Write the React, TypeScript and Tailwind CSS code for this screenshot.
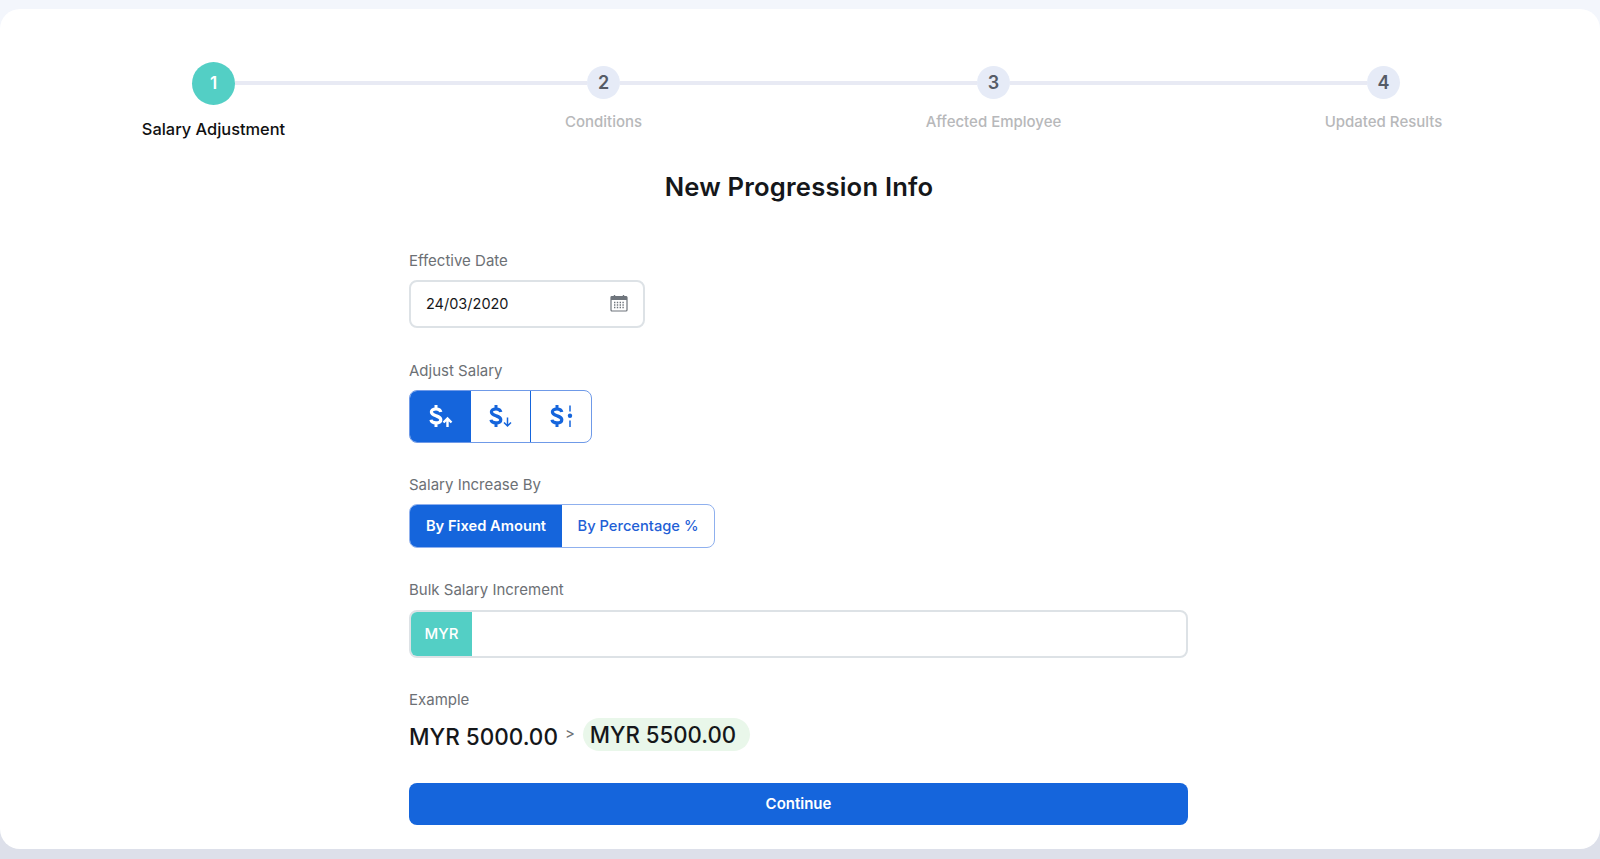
const steps = [
  { n: 1, label: "Salary Adjustment" },
  { n: 2, label: "Conditions" },
  { n: 3, label: "Affected Employee" },
  { n: 4, label: "Updated Results" },
]

function Stepper() {
  return (
    <div className="grid grid-cols-[390px_390px_390px_390px] pl-[18.5px] pt-[53px]">
      {steps.map((step, i) => (
        <div key={step.n} className="flex flex-col items-center">
          <div className="flex h-[42px] w-full items-center">
            <div className={i === 0 ? "h-1 flex-1" : "h-1 flex-1 bg-[#e8eaf4]"} />
            {i === 0 ? (
              <div className="flex h-[43px] w-[43px] shrink-0 items-center justify-center rounded-full bg-[#53cfc5] pt-[2px] text-[17px] font-semibold text-white">
                {step.n}
              </div>
            ) : (
              <div className="mb-px flex h-[33px] w-[33px] shrink-0 items-center justify-center rounded-full bg-[#e6ebf7] text-[18px] font-semibold text-[#555b66]">
                {step.n}
              </div>
            )}
            <div className={i === 3 ? "h-1 flex-1" : "h-1 flex-1 bg-[#e8eaf4]"} />
          </div>
          {i === 0 ? (
            <div className="mt-[15px] text-[16.4px] leading-5 font-medium whitespace-nowrap text-[#111]">{step.label}</div>
          ) : (
            <div className="mt-[8px] text-[15px] leading-5 font-medium whitespace-nowrap text-[#b7b8ba]">{step.label}</div>
          )}
        </div>
      ))}
    </div>
  )
}

function Label({ children }: { children: string }) {
  return <div className="text-[15px] leading-5 text-[#6c7075]">{children}</div>
}

function CalendarIcon() {
  return (
    <svg width="18" height="18" viewBox="0 0 18 18" fill="none" className="-mt-[2px] -mr-[1px] text-[#6f757c]">
      <rect x="1" y="2.5" width="16" height="14.5" rx="1" stroke="currentColor" strokeWidth="1.2" />
      <rect x="1" y="2.5" width="16" height="3.5" fill="currentColor" />
      <path d="M4.5 1v2.5M13.5 1v2.5" stroke="currentColor" strokeWidth="1.4" />
      <path d="M4 8.5h10M4 11h10M4 13.5h10" stroke="currentColor" strokeWidth="1.3" strokeDasharray="1.4 1.4" />
    </svg>
  )
}

// dollar mark with a small up / down / range marker on its right
function AdjustIcon({ kind }: { kind: "up" | "down" | "range" }) {
  return (
    <svg width="26" height="26" viewBox="0 0 26 26" fill="none" stroke="currentColor" className="mt-px">
      <path
        d="M12.8 8C12.4 5.8 10.6 5 8 5C5.2 5 3.4 6.1 3.4 8.1C3.4 10.3 5.6 11 8 11.8C10.4 12.6 12.8 13.3 12.8 15.7C12.8 17.8 10.9 18.9 8 18.9C5.2 18.9 3.3 17.9 3 15.8"
        strokeWidth="3.2"
      />
      <path d="M8 1v4M8 18.9V23" strokeWidth="3" />
      {kind === "up" && <path d="M19.5 23v-8.5M15.5 18.5l4-4 4 4" strokeWidth="2.4" />}
      {kind === "down" && <path d="M19.5 13.5V22M16 18.5l3.5 3.5 3.5-3.5" strokeWidth="1.5" />}
      {kind === "range" && (
        <>
          <path d="M21 1.5v6M21 16.5v6.5" strokeWidth="1.5" />
          <circle cx="21" cy="11.8" r="2.2" fill="currentColor" stroke="none" />
        </>
      )}
    </svg>
  )
}

export default function App() {
  return (
    <div className="h-[859px] overflow-hidden bg-[linear-gradient(#f3f6fc_50%,#dde0ea_50%)] pt-[9px] font-['Inter',sans-serif]">
      <div className="h-[840px] rounded-[20px] bg-white">
        <Stepper />

        <h1 className="mt-[30px] pr-[2px] text-center text-[25.6px] leading-9 font-semibold tracking-[0.2px] text-[#15171a]">
          New Progression Info
        </h1>

        <div className="mt-[46px] ml-[409px] w-[779px]">
          <Label>Effective Date</Label>
          <div className="mt-[9px] flex h-12 w-[236px] items-center justify-between rounded-lg border-2 border-[#dde2e6] pr-4 pl-[15px] text-[14.5px] text-[#15171a]">
            <span>24/03/2020</span>
            <CalendarIcon />
          </div>

          <div className="mt-[33px]">
            <Label>Adjust Salary</Label>
          </div>
          <div className="mt-[9px] flex h-[53px] w-[183px] overflow-hidden rounded-lg border border-[#6f9ae8] text-[#1565dc]">
            <div className="flex w-[61px] items-center justify-center bg-[#1565dc] text-white">
              <AdjustIcon kind="up" />
            </div>
            <div className="flex w-[60px] items-center justify-center border-r border-[#1565dc]">
              <AdjustIcon kind="down" />
            </div>
            <div className="flex flex-1 items-center justify-center pl-[2px]">
              <AdjustIcon kind="range" />
            </div>
          </div>

          <div className="mt-[32px]">
            <Label>Salary Increase By</Label>
          </div>
          <div className="mt-[9px] flex h-[44px] w-[306px] overflow-hidden rounded-lg border border-[#8fb0ee] text-[14.7px]">
            <div className="flex w-[152px] items-center justify-center bg-[#1565dc] font-semibold text-white">By Fixed Amount</div>
            <div className="flex flex-1 items-center justify-center font-medium text-[#1f5fd6]">By Percentage %</div>
          </div>

          <div className="mt-[32px]">
            <Label>Bulk Salary Increment</Label>
          </div>
          <div className="mt-[10px] flex h-12 overflow-hidden rounded-lg border-2 border-[#dde2e6]">
            <div className="flex w-[61px] items-center justify-center bg-[#53cfc5] text-[15px] font-medium text-white">MYR</div>
          </div>

          <div className="mt-[32px]">
            <Label>Example</Label>
          </div>
          <div className="mt-[8px] flex h-[33px] items-center">
            <span className="mt-1 text-[22.5px] font-medium whitespace-nowrap text-[#15171a]">MYR 5000.00</span>
            <span className="ml-[7px] text-[15px] text-[#6c7075]">&gt;</span>
            <span className="ml-[8px] flex h-[33px] w-[167px] items-center rounded-full bg-[#e9f7ea] pl-[7px] text-[22.2px] font-medium whitespace-nowrap text-[#15171a]">
              MYR 5500.00
            </span>
          </div>

          <div className="mt-[32px] flex h-[42px] items-center justify-center rounded-lg bg-[#1565dc] text-[15px] font-semibold text-white">
            Continue
          </div>
        </div>
      </div>
    </div>
  )
}
